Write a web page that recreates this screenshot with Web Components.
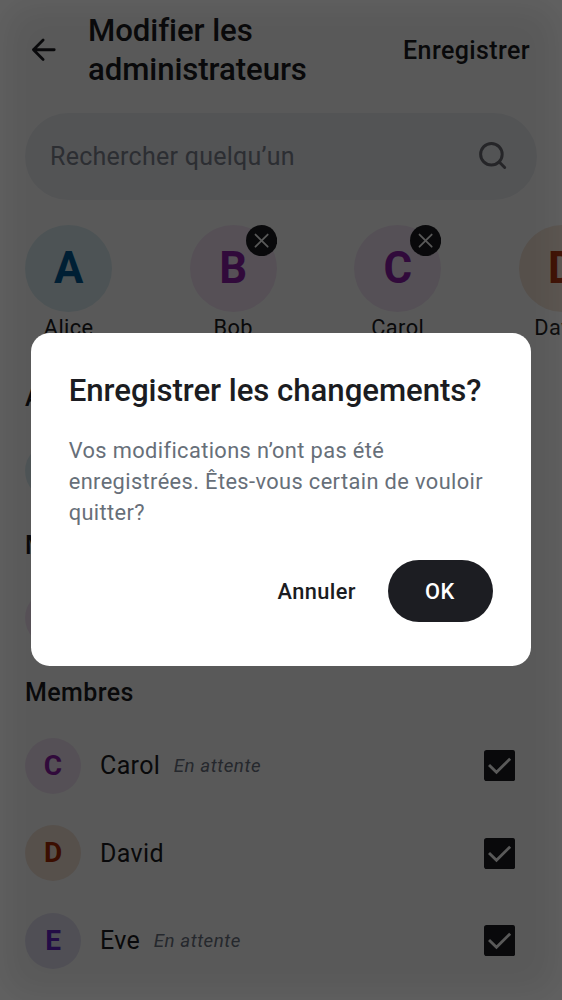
<!DOCTYPE html>
<html lang="fr">
<head>
<meta charset="utf-8">
<title>Modifier les administrateurs</title>
<style>
html, body { margin: 0; height: 100%; overflow: hidden; background: #fff; }
body { font-family: Roboto, "Liberation Sans", sans-serif; color: #1b1c21; }
</style>
</head>
<body>
<admin-screen></admin-screen>
<script>
const define = (name, render) => customElements.define(name, class extends HTMLElement {
  connectedCallback() {
    if (this.shadowRoot) return;
    this.attachShadow({ mode: 'open' }).innerHTML = render(this);
  }
});

define('app-header', () => `
<style>
:host { display: flex; align-items: center; height: 100px; box-sizing: border-box; padding: 0 32px 0 25px; }
.back { width: 37.5px; height: 37.5px; margin-right: 25.5px; flex: none; }
h1 { margin: 0; flex: 1; font-size: 31.2px; line-height: 39px; font-weight: 500; letter-spacing: -.08px; font-variant-ligatures: common-ligatures; }
.save { font-size: 25px; font-weight: 500; letter-spacing: .39px; }
</style>
<svg class="back" viewBox="0 0 24 24" fill="none" stroke="currentColor" stroke-width="1.8" stroke-linecap="round" stroke-linejoin="round"><path d="M18.7 12H5.4M11.6 5.8L5.4 12l6.2 6.2"/></svg>
<h1><slot></slot></h1><span class="save">Enregistrer</span>`);

define('search-field', () => `
<style>
:host { display: flex; align-items: center; justify-content: space-between; box-sizing: border-box; height: 87px; margin: 13px 25px 0; padding: 0 25px; border-radius: 44px; background: #edf0f4; color: #7e8491; font-size: 25px; letter-spacing: .26px; }
svg { width: 37.5px; height: 37.5px; color: #6a6c72; }
</style>
<slot></slot>
<svg viewBox="0 0 24 24" fill="none" stroke="currentColor" stroke-width="1.9" stroke-linecap="round"><circle cx="10.5" cy="10.4" r="6.9"/><path d="M15.5 15.4l3.5 3.5"/></svg>`);

define('user-avatar', el => `
<style>
:host { display: grid; place-items: center; flex: none; width: var(--size, 56px); height: var(--size, 56px); border-radius: 50%; font-weight: 700; font-size: calc(var(--size, 56px) * .5); line-height: 1; letter-spacing: 0; }
:host([tone=blue]) { background: #dceef3; color: #005a94; }
:host([tone=pink]) { background: #f5e6f7; color: #8c1fa9; }
:host([tone=plum]) { background: #f3e6f6; color: #8c1fa9; }
:host([tone=orange]) { background: #f5e5d8; color: #a82800; }
:host([tone=violet]) { background: #e5e3f4; color: #6424c8; }
</style><slot></slot>`);

define('selected-person', el => `
<style>
:host { display: flex; flex-direction: column; align-items: center; position: relative; flex: none; width: 87.4px; --size: 87.4px; font-size: 21.8px; letter-spacing: .39px; }
span { line-height: 31px; }
svg { position: absolute; right: 0; top: 0; width: 31.2px; height: 31.2px; }
</style>
<user-avatar tone="${el.getAttribute('tone')}">${el.textContent[0]}</user-avatar>
<span><slot></slot></span>
${el.hasAttribute('removable') ? '<svg viewBox="0 0 20 20"><circle cx="10" cy="10" r="10" fill="#1b1c21"/><path d="M6.1 6.1l7.8 7.8M13.9 6.1l-7.8 7.8" stroke="#fff" stroke-width="1.15" stroke-linecap="round"/></svg>' : ''}`);

define('people-strip', () => `
<style>:host { display: flex; gap: 77.15px; margin-top: 25px; padding-left: 25px; height: 120px; overflow: hidden; }</style><slot></slot>`);

define('member-group', el => `
<style>
:host { display: block; }
h2 { margin: 0; padding: 1px 25px 0; font-size: 25px; line-height: 59px; font-weight: 500; letter-spacing: .39px; }
</style>
<h2>${el.getAttribute('heading')}</h2><slot></slot>`);

define('member-row', el => `
<style>
:host { display: flex; align-items: center; height: 87.4px; box-sizing: border-box; padding: 0 47px 0 25px; font-size: 25px; letter-spacing: .36px; }
.name { margin-left: 19px; }
em { margin-left: 13.5px; font-size: 18.7px; letter-spacing: .55px; color: #6b7280; }
svg { margin-left: auto; width: 31.2px; height: 31.2px; }
</style>
<user-avatar tone="${el.getAttribute('tone')}">${el.textContent[0]}</user-avatar>
<span class="name"><slot></slot></span>
${el.hasAttribute('pending') ? '<em>En attente</em>' : ''}
<svg viewBox="0 0 31 31"><rect width="31" height="31" rx="2.6" fill="#1b1c21"/><path d="M5 14.8l7.4 7.4L26 8.6" fill="none" stroke="#fff" stroke-width="2.8"/></svg>`);

define('modal-scrim', () => `
<style>
:host { position: absolute; inset: 0; display: flex; align-items: flex-start; justify-content: center; padding-top: 333.3px; box-sizing: border-box; background: rgba(0,0,0,.65); box-shadow: inset 0 0 44px rgba(255,255,255,.07); }
</style><slot></slot>`);

define('confirm-dialog', el => `
<style>
:host { display: block; box-sizing: border-box; width: 500px; height: 332.6px; padding: 37.7px; border-radius: 18.7px; background: #fff; }
h2 { margin: 0; font-size: 31.2px; line-height: 39px; font-weight: 500; letter-spacing: -.05px; white-space: nowrap; }
p { margin: 25px 0 0; font-size: 21.8px; line-height: 31.2px; letter-spacing: .39px; color: #676f79; }
.actions { display: flex; align-items: center; justify-content: flex-end; gap: 32px; margin-top: 31.5px; font-size: 21.8px; font-weight: 500; letter-spacing: .39px; }
.ok { display: grid; place-items: center; width: 105.4px; height: 62.4px; box-sizing: border-box; padding-right: 1.5px; border-radius: 31.2px; background: #1c1d22; color: #fff; }
</style>
<h2>${el.getAttribute('heading')}</h2>
<p><slot></slot></p>
<div class="actions"><span>Annuler</span><span class="ok">OK</span></div>`);

define('admin-screen', () => `
<style>
:host { display: block; position: relative; width: 562px; height: 1000px; overflow: hidden; }
main { padding-top: 22.4px; }
</style>
<app-header>Modifier les administrateurs</app-header>
<search-field>Rechercher quelqu’un</search-field>
<people-strip>
<selected-person tone="blue">Alice</selected-person>
<selected-person tone="pink" removable>Bob</selected-person>
<selected-person tone="plum" removable>Carol</selected-person>
<selected-person tone="orange" removable>David</selected-person>
</people-strip>
<main>
<member-group heading="Administrateurs"><member-row tone="blue">Alice</member-row></member-group>
<member-group heading="Modérateurs"><member-row tone="pink">Bob</member-row></member-group>
<member-group heading="Membres">
<member-row tone="plum" pending>Carol</member-row>
<member-row tone="orange">David</member-row>
<member-row tone="violet" pending>Eve</member-row>
</member-group>
</main>
<modal-scrim><confirm-dialog heading="Enregistrer les changements?">Vos modifications n’ont pas été enregistrées. Êtes-vous certain de vouloir quitter?</confirm-dialog></modal-scrim>`);
</script>
</body>
</html>
